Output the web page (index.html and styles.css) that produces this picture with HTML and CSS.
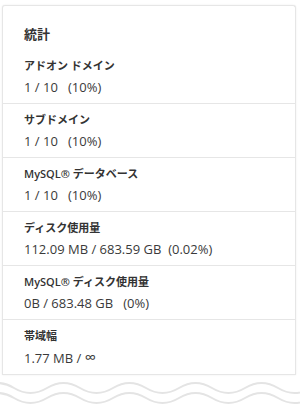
FILE: index.html
```html
<!DOCTYPE html>
<html lang="ja">
<head>
  <meta charset="UTF-8">
  <title>統計</title>
  <link rel="stylesheet" href="styles.css">
</head>
<body>

<div class="card">
  <h3 class="title">統計</h3>

  <div class="stat">
    <div class="label">アドオン ドメイン</div>
    <div class="value">1 / 10&nbsp;&nbsp; (10%)</div>
  </div>
  <div class="stat">
    <div class="label">サブドメイン</div>
    <div class="value">1 / 10&nbsp;&nbsp; (10%)</div>
  </div>
  <div class="stat">
    <div class="label">MySQL® データベース</div>
    <div class="value">1 / 10&nbsp;&nbsp; (10%)</div>
  </div>
  <div class="stat">
    <div class="label">ディスク使用量</div>
    <div class="value">112.09 MB / 683.59 GB&nbsp;&nbsp;(0.02%)</div>
  </div>
  <div class="stat">
    <div class="label">MySQL® ディスク使用量</div>
    <div class="value">0B / 683.48 GB&nbsp;&nbsp; (0%)</div>
  </div>
  <div class="stat">
    <div class="label">帯域幅</div>
    <div class="value">1.77 MB / <span class="inf">∞</span></div>
  </div>
</div>

<svg class="torn" width="300" height="30" viewBox="0 0 300 30">
  <path d="M-19 10 q16.5 -10 33 0 t33 0 t33 0 t33 0 t33 0 t33 0 t33 0 t33 0 t33 0 t33 0 t33 0" />
  <path d="M-19 20 q16.5 -10 33 0 t33 0 t33 0 t33 0 t33 0 t33 0 t33 0 t33 0 t33 0 t33 0 t33 0" />
</svg>

</body>
</html>
```

FILE: styles.css
```css
body { margin: 0; background: #fff; font-family: "Open Sans", "Noto Sans CJK JP", sans-serif; color: #333; }
.card { margin: 5px 4px 0 2px; border: 1px solid #e6e6e6; border-bottom: none; border-radius: 3px 3px 0 0; box-shadow: 0 0 2px rgba(0,0,0,0.08); background: #fff; }
.title { margin: 0; padding: 20px 21px 8px; font-size: 13px; line-height: 16px; font-weight: 700; }
.stat { padding: 8px 21px; border-bottom: 1px solid #e6e6e6; }
.label { font-size: 11px; line-height: 16px; font-weight: 600; }
.value { margin-top: 5px; font-size: 13px; line-height: 16px; color: #3a3a3a; }
.inf { font-size: 16px; line-height: 16px; }
.torn { display: block; margin-top: 3px; }
.torn path { fill: none; stroke: #e4e4e4; stroke-width: 2; }
```
